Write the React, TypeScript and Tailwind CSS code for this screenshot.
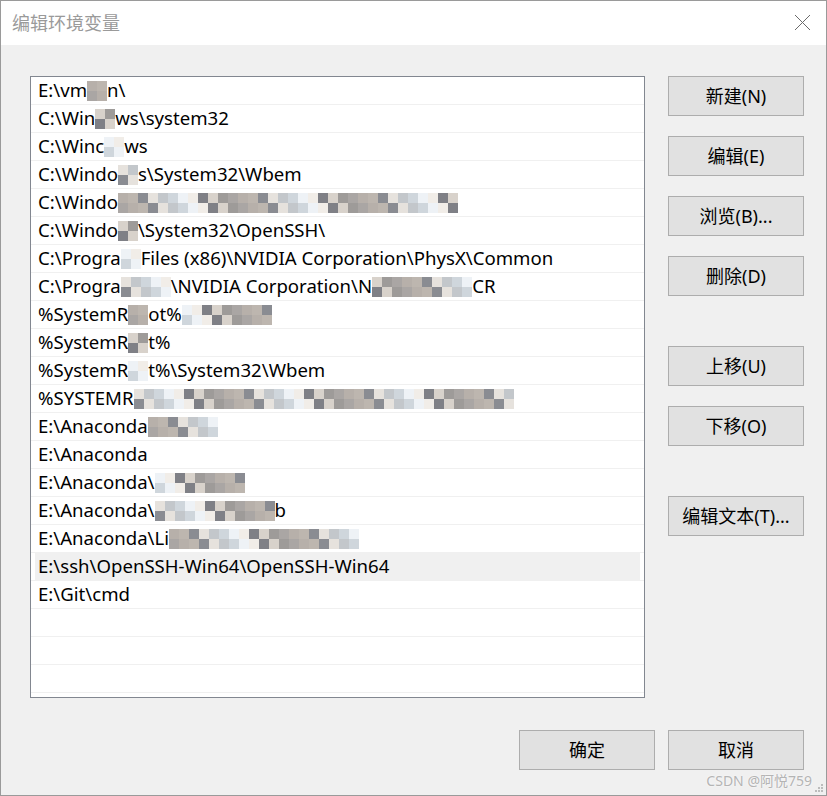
import { Fragment } from "react";

const FONT = "font-['Noto_Sans','Noto_Sans_CJK_SC',sans-serif]";

const MOSAIC = [
  "bg-[#e6e2dd]",
  "bg-[#9e9b99]",
  "bg-[#cfd6dc]",
  "bg-[#b7b0aa]",
  "bg-[#f1ede8]",
  "bg-[#8a8c92]",
  "bg-[#d8d2cb]",
  "bg-[#c3c7cb]",
  "bg-[#aaa6a4]",
  "bg-[#eef2f6]",
  "bg-[#bdb6af]",
  "bg-[#7f8086]",
];

type Part = string | number;

// number = blurred (mosaic) segment width in px
const ROWS: Part[][] = [
  ["E:\\vm", 20, "n\\"],
  ["C:\\Win", 20, "ws\\system32"],
  ["C:\\Winc", 20, "ws"],
  ["C:\\Windo", 20, "s\\System32\\Wbem"],
  ["C:\\Windo", 340],
  ["C:\\Windo", 20, "\\System32\\OpenSSH\\"],
  ["C:\\Progra", 20, "Files (x86)\\NVIDIA Corporation\\PhysX\\Common"],
  ["C:\\Progra", 50, "\\NVIDIA Corporation\\N", 100, "CR"],
  ["%SystemR", 20, "ot%", 90],
  ["%SystemR", 20, "t%"],
  ["%SystemR", 20, "t%\\System32\\Wbem"],
  ["%SYSTEMR", 380],
  ["E:\\Anaconda", 70],
  ["E:\\Anaconda"],
  ["E:\\Anaconda\\", 90],
  ["E:\\Anaconda\\", 120, "b"],
  ["E:\\Anaconda\\Li", 190],
];

function Mosaic({ width, seed }: { width: number; seed: number }) {
  const cols = Math.max(1, Math.round(width / 10));
  return (
    <span className="inline-flex flex-col align-middle">
      {[0, 1].map((r) => (
        <span key={r} className="flex">
          {Array.from({ length: cols }).map((_, c) => (
            <span
              key={c}
              className={`block w-[10px] h-[10px] ${MOSAIC[(c * 7 + r * 5 + seed * 3) % MOSAIC.length]}`}
            />
          ))}
        </span>
      ))}
    </span>
  );
}

function Row({ parts, idx, selected }: { parts: Part[]; idx: number; selected?: boolean }) {
  return (
    <div className="h-[28px] border-b border-[#f0f0f0] px-[4px]">
      <div
        className={
          "h-[27px] flex items-center pl-[3px] whitespace-nowrap overflow-hidden " +
          (selected ? "bg-[#f0f0f0]" : "")
        }
      >
        {parts.map((p, i) => (
          <Fragment key={i}>
            {typeof p === "string" ? <span>{p}</span> : <Mosaic width={p} seed={idx + i} />}
          </Fragment>
        ))}
      </div>
    </div>
  );
}

function Btn({ children, className = "" }: { children: React.ReactNode; className?: string }) {
  return (
    <div
      className={
        "w-[136px] h-[40px] flex items-center justify-center bg-[#e1e1e1] border border-[#adadad] text-[18px] text-black " +
        className
      }
    >
      {children}
    </div>
  );
}

export default function App() {
  return (
    <div className={`w-[827px] h-[796px] bg-[#f0f0f0] border border-[#9a9a9a] flex flex-col ${FONT}`}>
      {/* Title bar */}
      <div className="h-[44px] bg-white flex items-center justify-between pl-[11px] pr-[15px] shrink-0">
        <span className="text-[18px] text-[#9a9a9a]">编辑环境变量</span>
        <svg width="17" height="17" viewBox="0 0 17 17" className="mb-[1px]">
          <path d="M1 1 L16 16 M16 1 L1 16" stroke="#6a6a6a" strokeWidth="1" fill="none" />
        </svg>
      </div>

      {/* Body */}
      <div className="flex-1 pt-[31px] pl-[29px] flex flex-col relative">
        <div className="flex">
          <div className="w-[615px] h-[622px] bg-white border border-[#828790] text-[18.6px] text-black leading-none">
            {ROWS.map((r, i) => (
              <Row key={i} parts={r} idx={i} />
            ))}
            <Row parts={["E:\\ssh\\OpenSSH-Win64\\OpenSSH-Win64"]} idx={17} selected />
            <Row parts={["E:\\Git\\cmd"]} idx={18} />
            <Row parts={[]} idx={19} />
            <Row parts={[]} idx={20} />
            <Row parts={[]} idx={21} />
          </div>

          <div className="ml-[23px] flex flex-col">
            <Btn>新建(N)</Btn>
            <Btn className="mt-[20px]">编辑(E)</Btn>
            <Btn className="mt-[20px]">浏览(B)...</Btn>
            <Btn className="mt-[20px]">删除(D)</Btn>
            <Btn className="mt-[50px]">上移(U)</Btn>
            <Btn className="mt-[20px]">下移(O)</Btn>
            <Btn className="mt-[50px]">编辑文本(T)...</Btn>
          </div>
        </div>

        <div className="flex justify-end gap-[13px] mt-[32px] pr-[22px]">
          <Btn>确定</Btn>
          <Btn>取消</Btn>
        </div>

        {/* watermark + resize grip */}
        <div className="absolute right-[14px] bottom-[4px] text-[14px] text-[#b4b4b4] [text-shadow:0_0_2px_#fff]">
          CSDN @阿悦759
        </div>
        <svg width="10" height="10" viewBox="0 0 10 10" className="absolute right-[2px] bottom-[2px]">
          <rect x="7" y="1" width="2" height="2" fill="#bcbcbc" />
          <rect x="4" y="4" width="2" height="2" fill="#bcbcbc" />
          <rect x="7" y="4" width="2" height="2" fill="#bcbcbc" />
          <rect x="1" y="7" width="2" height="2" fill="#bcbcbc" />
          <rect x="4" y="7" width="2" height="2" fill="#bcbcbc" />
          <rect x="7" y="7" width="2" height="2" fill="#bcbcbc" />
        </svg>
      </div>
    </div>
  );
}
